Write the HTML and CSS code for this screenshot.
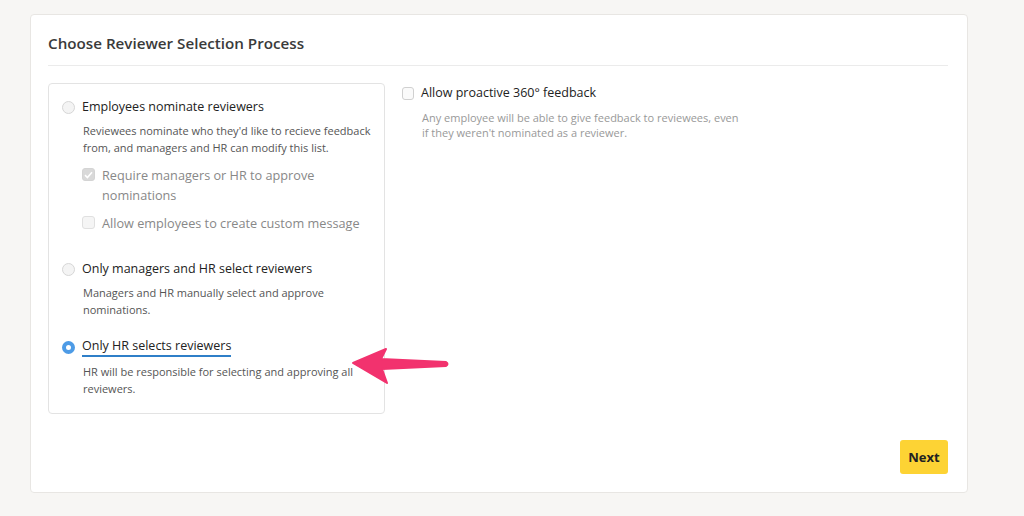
FILE: index.html
```html
<!DOCTYPE html>
<html lang="en">
<head>
    <meta charset="UTF-8">
    <title>Choose Reviewer Selection Process</title>
    <link rel="stylesheet" href="styles.css">
</head>
<body>
    <div class="card">
        <h2 class="card-title">Choose Reviewer Selection Process</h2>
        <div class="card-body">
            <div class="option-box">
                <div class="option">
                    <label class="option-label"><span class="radio"></span>Employees nominate reviewers</label>
                    <p class="option-desc">Reviewees nominate who they'd like to recieve feedback from, and managers and HR can modify this list.</p>
                    <div class="sub-options">
                        <label class="sub-option"><span class="checkbox checked"><svg width="9" height="8" viewBox="0 0 9 8"><path d="M1 4.2 3.4 6.5 8 1.3" fill="none" stroke="#fff" stroke-width="1.6"/></svg></span>Require managers or HR to approve nominations</label>
                        <label class="sub-option"><span class="checkbox"></span>Allow employees to create custom message</label>
                    </div>
                </div>
                <div class="option second">
                    <label class="option-label"><span class="radio"></span>Only managers and HR select reviewers</label>
                    <p class="option-desc">Managers and HR manually select and approve nominations.</p>
                </div>
                <div class="option">
                    <label class="option-label"><span class="radio selected"></span><span class="underlined">Only HR selects reviewers</span></label>
                    <p class="option-desc">HR will be responsible for selecting and approving all reviewers.</p>
                </div>
            </div>
            <div class="side-option">
                <label class="option-label"><span class="checkbox plain"></span>Allow proactive 360° feedback</label>
                <p class="side-desc">Any employee will be able to give feedback to reviewees, even if they weren't nominated as a reviewer.</p>
            </div>
        </div>
        <div class="card-footer">
            <button class="next-btn">Next</button>
        </div>
        <svg class="arrow" width="100" height="40" viewBox="0 0 100 40">
            <path d="M2 16 L35 2 L30 12 L95 15 Q98 17 95 19 L31 22 L36 36 Z" fill="#f2326e" stroke="#f2326e" stroke-width="2" stroke-linejoin="round"/>
        </svg>
    </div>
</body>
</html>
```
FILE: styles.css
```css
* {
    margin: 0;
    padding: 0;
    box-sizing: border-box;
}

body {
    background-color: #f7f6f4;
    font-family: "Open Sans", Lato, sans-serif;
    color: #222;
    padding: 14px 0 0 30px;
}

.card {
    position: relative;
    width: 938px;
    height: 479px;
    background-color: #fff;
    border: 1px solid #e8e6e3;
    border-radius: 4px;
    padding: 17px 19px 0 17px;
}

.card-title {
    font-size: 15.2px;
    line-height: 22px;
    font-weight: 600;
    color: #3a3a3a;
    padding-bottom: 11px;
    border-bottom: 1px solid #ebebeb;
}

.card-body {
    display: flex;
    gap: 17px;
    margin-top: 17px;
}

.option-box {
    width: 337px;
    height: 331px;
    border: 1px solid #e3e3e3;
    border-radius: 4px;
    padding: 14px 13px 0 13px;
    display: flex;
    flex-direction: column;
    gap: 19px;
}

.option.second {
    margin-top: 8px;
}

.option-label {
    display: flex;
    align-items: center;
    gap: 7px;
    font-size: 12.5px;
    line-height: 18px;
    color: #222;
}

.underlined {
    border-bottom: 2px solid #2f7fc8;
    line-height: 18px;
}

.option-desc {
    margin: 6px 0 0 21px;
    font-size: 11px;
    line-height: 17px;
    color: #555;
}

.radio {
    width: 13px;
    height: 13px;
    border-radius: 50%;
    border: 1px solid #d6d6d6;
    background: #f4f4f4;
    flex-shrink: 0;
}

.radio.selected {
    border: 4px solid #4d9be6;
    background: #fff;
}

.sub-options {
    margin: 9px 0 0 20px;
    display: flex;
    flex-direction: column;
    gap: 8px;
}

.sub-option {
    display: flex;
    align-items: flex-start;
    gap: 7px;
    font-size: 12.7px;
    line-height: 20px;
    color: #888;
}

.checkbox {
    width: 13px;
    height: 13px;
    margin-top: 3px;
    border: 1px solid #e0e0e0;
    border-radius: 3px;
    background: #f5f5f5;
    flex-shrink: 0;
    display: flex;
    align-items: center;
    justify-content: center;
}

.checkbox.checked {
    background: #d9d9d9;
    border-color: #d4d4d4;
}

.checkbox.plain {
    margin-top: 0;
    width: 12px;
    height: 13px;
    border-color: #d0d0d0;
    background: #fafafa;
}

.side-option {
    width: 345px;
    padding-top: 1px;
}

.side-desc {
    margin: 8px 0 0 20px;
    font-size: 11px;
    line-height: 15px;
    color: #999;
}

.card-footer {
    display: flex;
    justify-content: flex-end;
    margin-top: 26px;
}

.next-btn {
    width: 48px;
    height: 34px;
    background-color: #fdd334;
    border: none;
    border-radius: 3px;
    font-family: "Open Sans", sans-serif;
    font-size: 13px;
    font-weight: 700;
    color: #222;
}

.arrow {
    position: absolute;
    left: 320px;
    top: 332px;
}
```
